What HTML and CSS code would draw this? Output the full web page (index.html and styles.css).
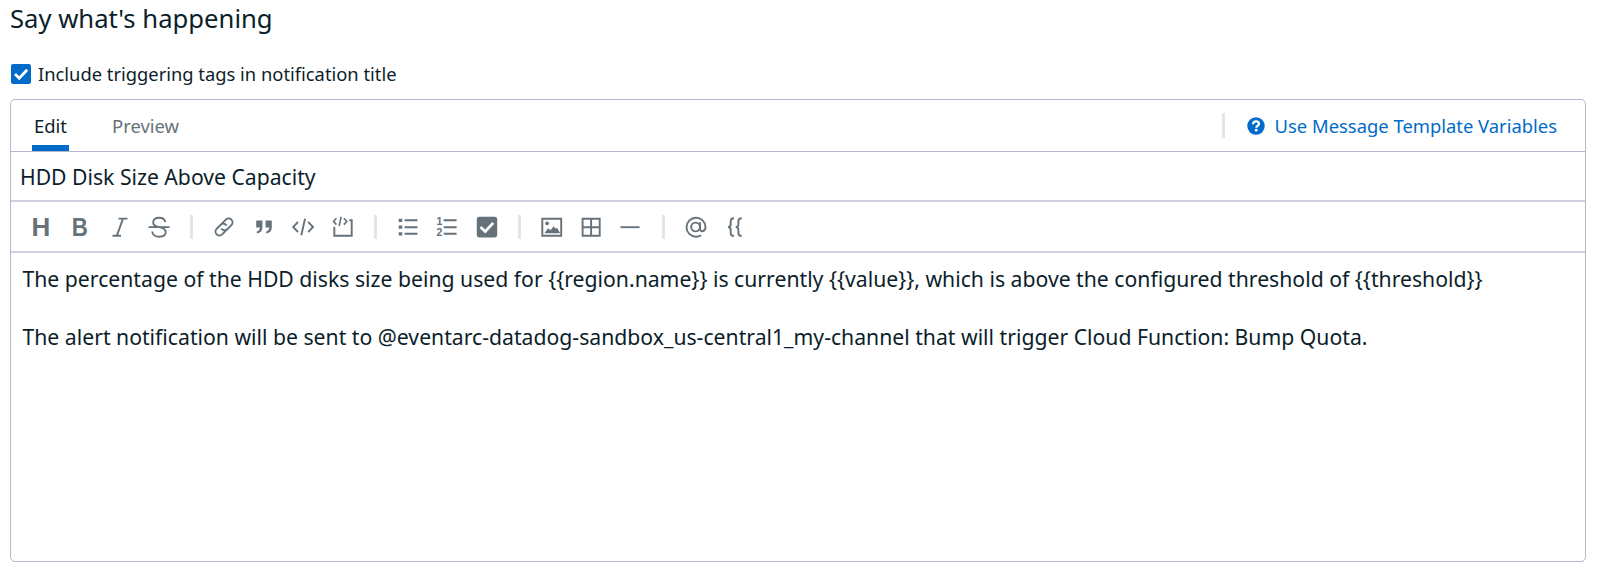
FILE: index.html
```html
<!DOCTYPE html>
<html lang="en">
<head>
<meta charset="utf-8">
<title>Say what's happening</title>
<link rel="stylesheet" href="styles.css">
</head>
<body>
<main class="page">
  <h2 class="heading">Say what's happening</h2>
  <label class="option">
    <svg class="option-box" viewBox="0 0 20 20"><rect width="20" height="20" rx="2.2" fill="#006bc8"/><path d="M4 10l4.200 4.200 8-8.500" fill="none" stroke="#fff" stroke-width="2.700"/></svg>
    <span class="option-text">Include triggering tags in notification title</span>
  </label>
  <section class="editor">
    <header class="tabs">
      <div class="tab tab-active"><span class="tab-edit">Edit</span></div>
      <div class="tab"><span class="tab-preview">Preview</span></div>
      <a class="help">
        <svg class="help-icon" viewBox="0 0 18 18"><circle cx="9" cy="9" r="8.7" fill="#006bc8"/><path d="M6 7.2C6.1 5.3 7.3 4.4 9 4.4c1.800 0 3 .9 3 2.400 0 2-2.700 1.900-2.700 3.900" fill="none" stroke="#fff" stroke-width="2.200"/><circle cx="9.200" cy="13.200" r="1.350" fill="#fff"/></svg>
        <span class="help-text">Use Message Template Variables</span>
      </a>
    </header>
    <div class="title"><span class="title-text">HDD Disk Size Above Capacity</span></div>
    <div class="toolbar">
      <span class="tool"><svg viewBox="0 0 24 24"><text class="letter" transform="translate(12 21.200) scale(1 1)">H</text></svg></span>
      <span class="tool"><svg viewBox="0 0 24 24"><text class="letter" transform="translate(11.800 21.200) scale(.86 1)">B</text></svg></span>
      <span class="tool"><svg viewBox="0 0 24 24"><path class="line" d="M10.500 3.600H19.500M4.500 20.700H13M15 3.600L8.800 20.700"/></svg></span>
      <span class="tool"><svg viewBox="0 0 24 24"><path class="line" d="M1.500 12.100H22.500M18.300 7.200C17.800 4.300 15.500 2.800 12.300 2.800 8.800 2.800 6.200 4.500 6.200 7.500c0 2.500 2 3.800 5.300 4.500M12.500 12.100c4 .8 6.200 2.200 6.200 5 0 3-2.700 4.700-6.300 4.700-4 0-6.800-2-7.200-5.300"/></svg></span>
      <i class="divider"></i>
      <span class="tool"><svg viewBox="0 0 24 24"><g transform="rotate(-45 12 12)"><path class="line" d="M13.200 15.900H5.500a3.900 3.900 0 0 1 0-7.800h5.800a3.900 3.900 0 0 1 3.700 4.700M10.800 8.100h7.700a3.900 3.900 0 0 1 0 7.800h-5.800A3.900 3.900 0 0 1 9 11.200"/></g></svg></span>
      <span class="tool"><svg viewBox="0 0 24 24"><path class="fill" d="M4.200 5.600h6.200v6.600c0 3.500-1.800 5.700-5.600 6.400v-2.100c2-.6 3-1.900 3.100-4H4.200zM13.600 5.600h6.200v6.600c0 3.500-1.800 5.700-5.600 6.400v-2.100c2-.6 3-1.900 3.100-4h-3.700z"/></svg></span>
      <span class="tool"><svg viewBox="0 0 24 24"><path class="line" d="M7 6.800L2.200 12 7 17.200M17.200 6.800L22 12l-4.800 5.200M14 3.700L10.300 20.300"/></svg></span>
      <span class="tool"><svg viewBox="0 0 24 24"><path class="line" d="M3.300 11.700V20.700H20.700V5.300H18.300"/><path class="line thin" d="M5.400 3.200L2.500 6.400 5.400 9.600M12.900 3.200l2.900 3.200-2.900 3.200M10.200 1.700L8.100 11"/></svg></span>
      <i class="divider"></i>
      <span class="tool"><svg viewBox="0 0 24 24"><path class="line" d="M8.600 5.300H21.500M8.600 12.200H21.500M8.600 18.800H21.500"/><path class="fill" d="M2.700 3.700h3.500v3.200H2.700zM2.700 10.600h3.500v3.200H2.700zM2.700 17.200h3.500v3.200H2.700z"/></svg></span>
      <span class="tool"><svg viewBox="0 0 24 24"><path class="line" d="M8.700 5.300H21.600M8.700 12.200H21.600M8.700 18.800H21.600"/><text class="digit" x="4.300" y="9.500">1</text><text class="digit" x="4.300" y="21">2</text></svg></span>
      <span class="tool"><svg viewBox="0 0 24 24"><rect class="fill" x="1.800" y="1.800" width="20.400" height="20.600" rx="2.400"/><path d="M5.500 12l4.700 4.500 8-8.700" fill="none" stroke="#fff" stroke-width="2.700"/></svg></span>
      <i class="divider"></i>
      <span class="tool"><svg viewBox="0 0 24 24"><path class="line" d="M2.300 3.800H21.200V20.700H2.300z"/><circle class="fill" cx="7.100" cy="8.300" r="1.900"/><path class="fill" d="M4.400 18.200l3.700-5 2.500 2.100 3-4 2.100 2.500 1.300-1 3.200 5.400z"/></svg></span>
      <span class="tool"><svg viewBox="0 0 24 24"><path class="line" d="M3.600 3.800H20.700V20.700H3.600zM12.100 3.800V20.700M3.600 12.200H20.700"/></svg></span>
      <span class="tool"><svg viewBox="0 0 24 24"><path class="line" d="M2.500 12.200H21.500"/></svg></span>
      <i class="divider"></i>
      <span class="tool"><svg viewBox="0 0 24 24"><circle class="line" cx="11.600" cy="12" r="4.400"/><path class="line" d="M16 7.300V13.500c0 4.200 5.500 3.600 5.500-1.500A9.500 9.500 0 1 0 12 21.700c2 0 3.500-.4 5-1.400"/></svg></span>
      <span class="tool"><svg viewBox="0 0 24 24"><path class="line" d="M11 3.300C8.300 3.300 7.700 4.200 7.700 6.300V9.300C7.700 11 7 12.100 5 12.100 7 12.100 7.700 13.200 7.700 14.900V17.900C7.700 20 8.300 20.900 11 20.900M18.700 3.300C16 3.300 15.400 4.200 15.400 6.300V9.300C15.400 11 14.700 12.100 12.700 12.100 14.700 12.100 15.400 13.200 15.400 14.900V17.900C15.400 20 16 20.900 18.700 20.900"/></svg></span>
    </div>
    <div class="message">
      <p class="message-first">The percentage of the HDD disks size being used for {{region.name}} is currently {{value}}, which is above the configured threshold of {{threshold}}</p>
      <p class="message-second">The alert notification will be sent to @eventarc-datadog-sandbox_us-central1_my-channel that will trigger Cloud Function: Bump Quota.</p>
    </div>
  </section>
</main>
</body>
</html>
```
FILE: styles.css
```css
* { box-sizing: border-box; }
body {
  margin: 0;
  background: #fff;
  color: #0c1e2b;
  font-family: "Noto Sans", sans-serif;
}
.page {
  height: 573px;
  padding: 0 14px 11px 10px;
  display: flex;
  flex-direction: column;
  white-space: nowrap;
}
.heading {
  margin: 0;
  height: 38px;
  font-size: 25.650px;
  font-weight: 400;
  line-height: 37px;
}
.option {
  height: 61px;
  padding: 21px 0 10px 1px;
  display: flex;
  align-items: center;
  gap: 7px;
}
.option-box { width: 20px; height: 20px; }
.option-text { font-size: 18.350px; line-height: 28px; }
.editor {
  flex: 1;
  display: flex;
  flex-direction: column;
  border: 1px solid #b3b8cc;
  border-radius: 5px;
}
.tabs {
  height: 52px;
  display: flex;
  padding-left: 21px;
  gap: 41px;
  border-bottom: 1px solid #b3b8cc;
}
.tab {
  display: flex;
  padding: 0 2px;
  line-height: 52px;
  font-size: 18.450px;
  color: #67727a;
}
.tab-active {
  color: #0c1e2b;
  border-bottom: 6px solid #006bc8;
}
.help {
  margin: 13px 28px 0 auto;
  height: 25px;
  display: flex;
  align-items: center;
  gap: 10px;
  padding-left: 22px;
  border-left: 3px solid #e2e4ee;
  color: #006bc8;
  font-size: 18.400px;
}
.help-icon { width: 18px; height: 18px; }
.title {
  height: 50px;
  padding-left: 9px;
  font-size: 21.170px;
  line-height: 49px;
  border-bottom: 2px solid #cdd0de;
}
.toolbar {
  height: 51px;
  display: flex;
  align-items: center;
  padding-left: 10.300px;
  border-bottom: 2px solid #cdd0de;
}
.tool {
  width: 39.450px;
  display: flex;
  justify-content: center;
}
.tool svg { width: 24px; height: 24px; display: block; overflow: visible; }
.divider {
  width: 3px;
  height: 24px;
  margin: 0 11.300px;
  background: #e2e4ee;
}
.line { fill: none; stroke: #65727a; stroke-width: 1.900px; }
.thin { stroke-width: 1.600px; }
.fill { fill: #65727a; }
.letter {
  fill: #65727a;
  font: bold 26px "Liberation Sans", sans-serif;
  text-anchor: middle;
}
.digit {
  fill: #65727a;
  font: bold 10.500px "Liberation Sans", sans-serif;
  text-anchor: middle;
}
.message {
  padding: 11px 12px 0 11.500px;
  font-size: 21.190px;
  line-height: 29px;
}
.message p { margin: 0 0 29px; }
```
